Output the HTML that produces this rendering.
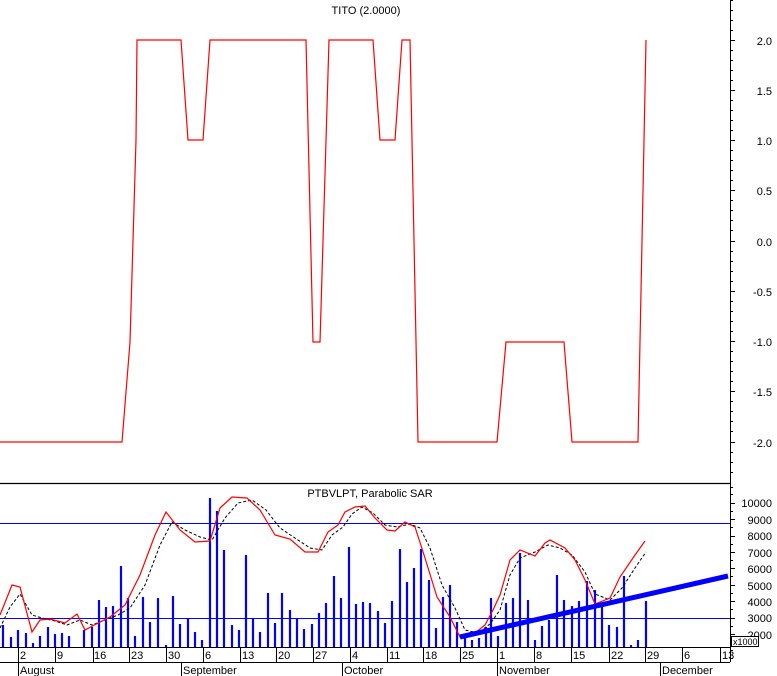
<!DOCTYPE html>
<html><head><meta charset="utf-8"><style>
html,body{margin:0;padding:0;background:#fff;}
svg{display:block;font-family:"Liberation Sans",sans-serif;}
</style></head><body>
<svg width="777" height="676" viewBox="0 0 777 676" xmlns="http://www.w3.org/2000/svg">
<rect width="777" height="676" fill="#fff"/>
<!-- top panel -->
<text x="366" y="14" font-size="11" text-anchor="middle">TITO (2.0000)</text>
<polyline fill="none" stroke="#f00" stroke-width="1.2" points="0,442 122,442 130,342 136,140 137,40 181,40 188,140 203,140 210,40 306,40 313,342 320,342 329,40 373,40 380,140 395,140 402,40 410,40 418,442 497,442 506,342 564,342 572,442 638,442 646,40"/>
<line x1="0" y1="483.5" x2="730" y2="483.5" stroke="#000" stroke-width="1.2"/>
<line x1="730.5" y1="0" x2="730.5" y2="662" stroke="#000"/>
<g stroke="#000">
<path d="M730 0.5h3M730 10.5h3M730 20.5h3M730 30.5h3M730 40.5h5M730 50.5h3M730 60.5h3M730 70.5h3M730 80.5h3M730 90.5h5M730 100.5h3M730 110.5h3M730 120.5h3M730 130.5h3M730 140.5h5M730 150.5h3M730 160.5h3M730 170.5h3M730 180.5h3M730 190.5h5M730 200.5h3M730 210.5h3M730 220.5h3M730 230.5h3M730 241.5h5M730 251.5h3M730 261.5h3M730 271.5h3M730 281.5h3M730 291.5h5M730 301.5h3M730 311.5h3M730 321.5h3M730 331.5h3M730 341.5h5M730 351.5h3M730 361.5h3M730 371.5h3M730 381.5h3M730 391.5h5M730 401.5h3M730 411.5h3M730 421.5h3M730 431.5h3M730 442.5h5M730 452.5h3M730 462.5h3M730 472.5h3"/>
</g>
<g font-size="11" text-anchor="end">
<text x="772" y="45">2.0</text><text x="772" y="95">1.5</text><text x="772" y="145">1.0</text><text x="772" y="195">0.5</text><text x="772" y="246">0.0</text><text x="772" y="296">-0.5</text><text x="772" y="346">-1.0</text><text x="772" y="396">-1.5</text><text x="772" y="447">-2.0</text>
</g>
<!-- bottom panel -->
<text x="370" y="497" font-size="11" text-anchor="middle">PTBVLPT, Parabolic SAR</text>
<line x1="0" y1="523.5" x2="730" y2="523.5" stroke="#00f"/>
<line x1="0" y1="618.5" x2="730" y2="618.5" stroke="#00f"/>
<path stroke="#00f" stroke-width="2.2" fill="none" d="M3 647V625M11 647V637M18 647V630M26 647V633M33 647V643M40 647V636M48 647V627M55 647V634M62 647V633M69 647V636M84 647V630M92 647V627M99 647V600M106 647V607M113 647V606M121 647V566M128 647V598M135 647V636M143 647V597M150 647V622M158 647V598M166 647V645M173 647V596M180 647V624M188 647V618M195 647V632M202 647V640M210 647V498M217 647V511M224 647V550M232 647V625M239 647V630M246 647V555M253 647V618M260 647V632M268 647V593M275 647V623M282 647V593M290 647V610M297 647V618M304 647V629M312 647V624M319 647V613M326 647V603M334 647V576M341 647V598M349 647V547M356 647V604M363 647V602M370 647V603M378 647V611M385 647V623M392 647V601M400 647V549M407 647V582M414 647V568M421 647V549M429 647V580M436 647V628M443 647V597M450 647V585M457 647V622M465 647V638M472 647V640M479 647V638M486 647V627M491 647V598M498 647V636M506 647V603M513 647V598M520 647V553M528 647V600M535 647V640M542 647V626M549 647V620M557 647V575M564 647V600M572 647V606M579 647V601M587 647V581M595 647V590M602 647V605M609 647V625M617 647V627M624 647V576M631 647V645M638 647V640M646 647V601"/>
<polyline fill="none" stroke="#000" stroke-width="1" stroke-dasharray="3,2" points="0,628 10,607 20,594 32,615 42,618 55,621 67,625 80,620 92,625 105,620 118,615 130,608 145,585 160,545 172,522 185,530 200,537 212,540 225,518 238,503 252,500 266,510 280,528 295,538 310,548 322,550 332,535 343,527 352,514 362,507 373,513 385,525 397,527 410,524 420,528 430,548 442,585 455,608 465,630 478,633 490,624 500,610 510,575 520,558 535,552 548,545 560,548 572,555 585,572 595,594 610,600 622,588 635,568 646,552"/>
<polyline fill="none" stroke="#f00" stroke-width="1.2" points="0,615 12,585 20,587 32,632 40,620 50,619 65,623 77,614 85,630 100,622 110,617 125,605 140,575 155,535 166,512 180,530 195,542 210,541 220,508 232,497 247,498 260,510 275,535 290,539 305,552 318,552 328,532 338,525 345,512 355,507 365,506 375,518 387,530 395,531 405,522 415,527 425,558 437,597 450,617 460,637 475,633 485,625 493,610 500,595 510,560 520,550 535,556 545,543 550,540 565,548 575,560 585,580 595,604 610,598 620,577 635,555 645,541"/>
<line x1="460" y1="637" x2="728" y2="576" stroke="#00f" stroke-width="5"/>
<g stroke="#000">
<path d="M730 487.5h3M730 494.5h3M730 503.5h5M730 511.5h3M730 519.5h5M730 527.5h3M730 536.5h5M730 544.5h3M730 552.5h5M730 560.5h3M730 568.5h5M730 576.5h3M730 585.5h5M730 593.5h3M730 601.5h5M730 609.5h3M730 618.5h5M730 626.5h3M730 634.5h5M730 642.5h3M730 650.5h3M730 658.5h3"/>
</g>
<g font-size="11" text-anchor="end">
<text x="772" y="507">10000</text><text x="772" y="524">9000</text><text x="772" y="540">8000</text><text x="772" y="557">7000</text><text x="772" y="573">6000</text><text x="772" y="590">5000</text><text x="772" y="606">4000</text><text x="772" y="622">3000</text><text x="772" y="639">2000</text>
</g>
<rect x="731.5" y="636.5" width="27" height="10" fill="#fff" stroke="#000"/>
<text x="733" y="645" font-size="9">x1000</text>
<!-- date axis -->
<line x1="0" y1="647.5" x2="730" y2="647.5" stroke="#000"/>
<line x1="0" y1="662.5" x2="730" y2="662.5" stroke="#000"/>
<g stroke="#000">
<path d="M18.5 648v14M55.5 648v14M93.5 648v14M129.5 648v14M166.5 648v14M203.5 648v14M240.5 648v14M276.5 648v14M313.5 648v14M350.5 648v14M387.5 648v14M423.5 648v14M460.5 648v14M497.5 648v14M534.5 648v14M571.5 648v14M609.5 648v14M645.5 648v14M682.5 648v14M720.5 648v14"/>
<path d="M18.5 663v13M181.5 663v13M342.5 663v13M497.5 663v13M660.5 663v13"/>
</g>
<g font-size="11">
<text x="20" y="659">2</text><text x="57" y="659">9</text><text x="94" y="659">16</text><text x="131" y="659">23</text><text x="168" y="659">30</text><text x="205" y="659">6</text><text x="242" y="659">13</text><text x="278" y="659">20</text><text x="315" y="659">27</text><text x="352" y="659">4</text><text x="389" y="659">11</text><text x="425" y="659">18</text><text x="462" y="659">25</text><text x="499" y="659">1</text><text x="536" y="659">8</text><text x="573" y="659">15</text><text x="611" y="659">22</text><text x="647" y="659">29</text><text x="684" y="659">6</text><text x="722" y="659">13</text>
<text x="20" y="674">August</text><text x="183" y="674">September</text><text x="344" y="674">October</text><text x="499" y="674">November</text><text x="662" y="674">December</text>
</g>
</svg>
</body></html>
